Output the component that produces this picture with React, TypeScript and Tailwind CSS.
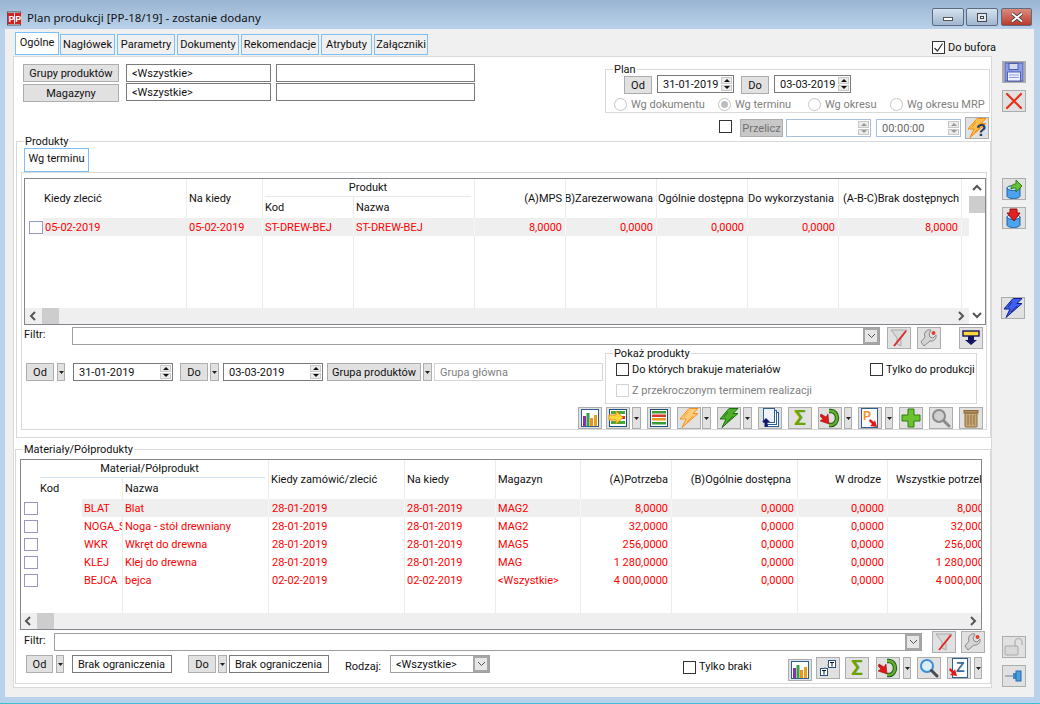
import type { ReactNode } from "react";

type Props = { className?: string; children?: ReactNode };

const borderLine = "border-r border-[#ececec]";

function Btn({ className = "", children }: Props) {
  return (
    <div className={`flex h-[18px] shrink-0 items-center justify-center border border-[#adadad] bg-[#e1e1e1] ${className}`}>
      {children}
    </div>
  );
}

function Drop({ className = "" }: Props) {
  return (
    <div className={`flex h-[18px] shrink-0 items-center justify-center border border-[#adadad] bg-[#e1e1e1] ${className}`}>
      <svg width="5" height="3" viewBox="0 0 5 3">
        <path d="M0 0h5L2.5 3z" fill="#222" />
      </svg>
    </div>
  );
}

function Inp({ className = "", children }: Props) {
  return (
    <div className={`flex h-[18px] shrink-0 items-center whitespace-nowrap border border-[#7a7a7a] bg-white pl-[5px] ${className}`}>
      {children}
    </div>
  );
}

function Spinner({ muted }: { muted?: boolean }) {
  const fill = muted ? "#999" : "#111";
  return (
    <div className="ml-auto mr-[1px] flex h-[14px] w-[11px] flex-col gap-[1px]">
      <div className="flex h-[7px] items-center justify-center border border-[#c8c8c8] bg-[#ececec]">
        <svg width="6" height="3" viewBox="0 0 6 3">
          <path d="M0 3 3 0l3 3z" fill={fill} />
        </svg>
      </div>
      <div className="flex h-[7px] items-center justify-center border border-[#c8c8c8] bg-[#ececec]">
        <svg width="6" height="3" viewBox="0 0 6 3">
          <path d="M0 0h6L3 3z" fill={fill} />
        </svg>
      </div>
    </div>
  );
}

function Chevron({ dir, color = "#555" }: { dir: "l" | "r" | "u" | "d"; color?: string }) {
  const d = { l: "M6 1 2 5l4 4", r: "M3 1l4 4-4 4", u: "M1 7l4-4 4 4", d: "M1 3l4 4 4-4" }[dir];
  return (
    <svg width="10" height="10" viewBox="0 0 10 10" className="shrink-0">
      <path d={d} fill="none" stroke={color} strokeWidth="2" />
    </svg>
  );
}

function ComboArrow() {
  return (
    <div className="ml-auto flex h-full w-[16px] items-center justify-center border-[2px] border-[#a6a6a6] bg-[#e6e6e6]">
      <svg width="9" height="6" viewBox="0 0 9 6">
        <path d="M1 1l3.5 3.5L8 1" fill="none" stroke="#555" strokeWidth="1" />
      </svg>
    </div>
  );
}

function Check({ className = "", checked }: { className?: string; checked?: boolean }) {
  return (
    <div className={`flex h-[13px] w-[13px] shrink-0 items-center justify-center border border-[#333] bg-white ${className}`}>
      {checked && (
        <svg width="11" height="11" viewBox="0 0 11 11">
          <path d="M1.5 6 4.5 9 9.5 1.5" fill="none" stroke="#333" strokeWidth="1.2" />
        </svg>
      )}
    </div>
  );
}

function Radio({ label, on, className = "" }: { label: string; on?: boolean; className?: string }) {
  return (
    <div className={`flex items-center text-[#808080] ${className}`}>
      <div className="flex h-[13px] w-[13px] items-center justify-center rounded-full border border-[#c4c4c4] bg-white">
        {on && <div className="h-[7px] w-[7px] rounded-full bg-[#bdbdbd]" />}
      </div>
      <span className="ml-[4px] whitespace-nowrap">{label}</span>
    </div>
  );
}

function Tool({ className = "", children }: Props) {
  return (
    <div className={`flex h-[22px] w-[24px] shrink-0 items-center justify-center border border-[#adadad] bg-[#e1e1e1] ${className}`}>
      {children}
    </div>
  );
}

function ToolDrop({ className = "" }: Props) {
  return (
    <div className={`flex h-[22px] shrink-0 items-center justify-center border border-[#adadad] bg-[#e1e1e1] ${className}`}>
      <svg width="5" height="3" viewBox="0 0 5 3">
        <path d="M0 0h5L2.5 3z" fill="#222" />
      </svg>
    </div>
  );
}

function Ico({ children, w = 20, h = 20 }: { children: ReactNode; w?: number; h?: number }) {
  return (
    <svg width={w} height={h} viewBox="0 0 20 20">
      {children}
    </svg>
  );
}

const IconChart = () => (
  <Ico>
    <rect x="1.5" y="1.5" width="17" height="17" fill="#fff" stroke="#2f6090" />
    <rect x="3" y="8" width="3" height="10" fill="#8a2fb0" />
    <rect x="6.5" y="5" width="3" height="13" fill="#3aa040" />
    <rect x="10" y="10" width="3" height="8" fill="#f09020" />
    <rect x="14" y="7" width="3" height="11" fill="#e8a020" />
  </Ico>
);

const IconTableArrow = () => (
  <Ico>
    <rect x="1.5" y="1.5" width="17" height="17" fill="#fff" stroke="#1d4f80" />
    <rect x="3" y="3" width="14" height="3" fill="#4aa838" />
    <rect x="3" y="8" width="14" height="3" fill="#d83828" />
    <rect x="3" y="13" width="14" height="3" fill="#4aa838" />
    <path d="M1 7h7V3l7 6.5L8 16v-4H1z" fill="#ffd83a" stroke="#f08a10" />
  </Ico>
);

const IconStripes = () => (
  <Ico>
    <rect x="1.5" y="1.5" width="17" height="17" fill="#fff" stroke="#1d4f80" />
    <rect x="3" y="3" width="14" height="2.5" fill="#3d9a3a" />
    <rect x="3" y="6.5" width="14" height="2.5" fill="#d83828" />
    <rect x="3" y="10" width="14" height="2.5" fill="#e89a20" />
    <rect x="3" y="14" width="14" height="2.5" fill="#3d9a3a" />
  </Ico>
);

const Bolt = ({ fill, stroke }: { fill: string; stroke: string }) => (
  <>
    <path d="M10 0.500h9l-5 5h5L3 19.500l4-8.500H1z" fill={fill} stroke={stroke} strokeLinejoin="round" />
    <path d="M9 4 5 9M14 8 8 14" stroke={stroke} strokeWidth="0.8" />
  </>
);

const IconPages = () => (
  <Ico>
    <rect x="7.5" y="4.5" width="11" height="14" fill="#fff" stroke="#2f5f90" />
    <rect x="5.5" y="2.5" width="11" height="14" fill="#fff" stroke="#2f5f90" />
    <rect x="3.5" y="0.5" width="11" height="14" fill="#eef4ff" stroke="#2f5f90" />
    <path d="M6 10l4 4H7.5v5h-3v-5H2z" fill="#16166e" />
  </Ico>
);

const Sigma = () => <span className="text-[21px] font-bold leading-none text-[#6da300]">Σ</span>;

const IconLoop = () => (
  <Ico>
    <path d="M9 3h2a6 7 0 0 1 0 14H9" fill="none" stroke="#1f5a14" strokeWidth="4.4" />
    <path d="M9 3h2a6 7 0 0 1 0 14H9" fill="none" stroke="#66b030" strokeWidth="2.4" />
    <path d="M1 6l5 3 2-3 1 10-9-3 3-2-3-3z" fill="#e01818" stroke="#8a0c0c" strokeWidth="0.5" />
  </Ico>
);

const IconPDoc = () => (
  <Ico>
    <rect x="1.5" y="0.5" width="16" height="19" fill="#fff" stroke="#2f5f90" />
    <text x="3" y="12" fontSize="12" fontWeight="700" fontFamily="Liberation Sans" fill="#f09030">P</text>
    <path d="M10 11l4 3 1-2 2 7-7-1 2-2-3-3z" fill="#e01818" />
  </Ico>
);

const IconPlus = () => (
  <Ico>
    <path d="M7 1h6v6h6v6h-6v6H7v-6H1V7h6z" fill="#6cc22e" stroke="#2f7a14" />
  </Ico>
);

const IconSearch = ({ ring, glass, handle }: { ring: string; glass: string; handle: string }) => (
  <Ico>
    <circle cx="8" cy="8" r="6" fill={glass} stroke={ring} strokeWidth="2" />
    <path d="M12.5 12.5 18 18" stroke={handle} strokeWidth="3" strokeLinecap="round" />
  </Ico>
);

const IconTrash = () => (
  <Ico>
    <rect x="4" y="5" width="12" height="14" rx="1" fill="#c8a878" stroke="#8a6a38" />
    <path d="M7 7v10M10 7v10M13 7v10" stroke="#8a6a38" />
    <rect x="3" y="2.5" width="14" height="2.5" fill="#b09060" stroke="#8a6a38" />
  </Ico>
);

const IconFilter = () => (
  <Ico>
    <path d="M2 2h16l-6 8v8l-4-2v-6z" fill="#d8d8d8" stroke="#a8a8a8" />
    <path d="M5 18 17 3" stroke="#e02828" strokeWidth="2" />
  </Ico>
);

const IconWrench = () => (
  <Ico>
    <path d="M12 2a5 5 0 0 0-6 7l-4 5 3 4 6-5a5 5 0 0 0 6-6l-3 3-3-1-1-3z" fill="#d4d4d4" stroke="#8a8a8a" />
    <circle cx="14.5" cy="5" r="2" fill="#e04030" />
  </Ico>
);

const IconDownBar = () => (
  <Ico>
    <rect x="2" y="3" width="16" height="5" fill="#ffd838" stroke="#14145e" strokeWidth="1.4" />
    <path d="M7 8h6v4h3l-6 5-6-5h3z" fill="#14145e" />
  </Ico>
);

const IconFloppy = () => (
  <Ico>
    <rect x="1" y="1" width="18" height="18" fill="#8d9ce4" stroke="#4f5fb0" />
    <rect x="5" y="1.5" width="9" height="6" fill="#d4d9f4" stroke="#4f5fb0" />
    <rect x="3.5" y="10" width="13" height="9" fill="#eef0fb" stroke="#4f5fb0" />
    <path d="M5 13h10M5 15.5h10" stroke="#8d9ce4" />
  </Ico>
);

const IconClose = () => (
  <Ico>
    <path d="M3 3 17 17M17 3 3 17" stroke="#e8301c" strokeWidth="2.2" strokeLinecap="round" />
  </Ico>
);

const Cylinder = () => (
  <>
    <path d="M3 9v8c0 1.500 3 2.500 6.500 2.500S16 18.500 16 17V9z" fill="#4ba4ec" stroke="#1f62a8" />
    <ellipse cx="9.500" cy="9" rx="6.500" ry="2.500" fill="#c6e4fb" stroke="#1f62a8" />
  </>
);

const IconDbUp = () => (
  <Ico>
    <Cylinder />
    <path d="M7 10c0-4 2-5 5-5V1l6 6-6 6V9c-2 0-4 0-5 1z" fill="#66c23a" stroke="#2e7e16" />
  </Ico>
);

const IconDbDown = () => (
  <Ico>
    <Cylinder />
    <path d="M6 1h7v4h3l-6 8-7-8h3z" fill="#e62020" stroke="#8e1010" />
  </Ico>
);

const IconLock = () => (
  <Ico>
    <path d="M11 10V5a3.500 3.500 0 0 1 7 0v3" fill="none" stroke="#bcbcbc" strokeWidth="1.600" />
    <rect x="1" y="9" width="13" height="9" rx="1" fill="#d8d8d8" stroke="#a8a8a8" />
  </Ico>
);

const IconPin = () => (
  <Ico>
    <path d="M1 10h8" stroke="#9aa0a8" strokeWidth="1.500" />
    <rect x="9" y="7" width="3" height="6" fill="#3e8bd0" />
    <rect x="12" y="5" width="5" height="10" fill="#4a9ce0" stroke="#2a6aa8" />
  </Ico>
);

const IconZDoc = () => (
  <Ico>
    <rect x="3.500" y="0.500" width="15" height="19" fill="#fff" stroke="#2f5f90" />
    <text x="7" y="14" fontSize="14" fontWeight="700" fontFamily="Liberation Sans" fill="#3a6a9a">Z</text>
    <path d="M1 10l4 3 1-2 2 7-7-1 2-2-3-3z" fill="#e01818" />
  </Ico>
);

const IconStack = () => (
  <Ico>
    <rect x="10.500" y="2.500" width="7" height="7" fill="#fff" stroke="#24507a" />
    <rect x="2.500" y="10.500" width="7" height="7" fill="#fff" stroke="#24507a" />
    <path d="M9 7h2M7 9v2" stroke="#888" />
    <path d="M12 4.500h4M14 4.500v4M4 12.500h4M6 12.500v4" stroke="#111" />
  </Ico>
);

const IconHelp = () => (
  <Ico>
    <Bolt fill="#ffc04a" stroke="#f08a10" />
    <text x="9" y="18" fontSize="17" fontWeight="700" fontFamily="Liberation Sans" fill="#1f3f6a">?</text>
  </Ico>
);

function WinBtn({ className = "", children }: Props) {
  return (
    <div className={`flex h-[18px] items-center justify-center rounded-[2px] border border-[#5d6b7e] ${className}`}>
      {children}
    </div>
  );
}

function TitleBar() {
  return (
    <div className="flex h-[29px] shrink-0 bg-gradient-to-b from-[#9ab5d2] to-[#b9d1ea] pl-[7px] pr-[8px]">
      <svg width="15" height="15" viewBox="0 0 15 15" className="mt-[11px]">
        <rect x="0.500" y="1" width="13" height="13" fill="#f4e8e8" stroke="#555" />
        <rect x="1" y="2" width="6" height="11" fill="#d82020" />
        <rect x="8" y="2" width="6" height="11" fill="#d82020" />
        <text x="1.500" y="11" fontSize="9" fontWeight="700" fontFamily="Liberation Sans" fill="#fff">P</text>
        <text x="8.300" y="11" fontSize="9" fontWeight="700" fontFamily="Liberation Sans" fill="#fff">P</text>
      </svg>
      <span className="ml-[5px] mt-[9px] whitespace-nowrap font-['Noto_Sans',sans-serif] text-[11.5px] leading-[17px] text-[#111]">
        Plan produkcji [PP-18/19] - zostanie dodany
      </span>
      <div className="ml-auto mt-[8px] flex gap-[2px]">
        <WinBtn className="w-[32px] bg-gradient-to-b from-[#d6e2ef] to-[#9fb6cf]">
          <div className="mt-[3px] h-[4px] w-[10px] border border-[#555] bg-white" />
        </WinBtn>
        <WinBtn className="w-[32px] bg-gradient-to-b from-[#d6e2ef] to-[#9fb6cf]">
          <div className="flex h-[9px] w-[10px] items-center justify-center border border-[#444] bg-[#dfe8f2]">
            <div className="h-[3px] w-[4px] border border-[#444] bg-white" />
          </div>
        </WinBtn>
        <WinBtn className="ml-[1px] w-[31px] bg-gradient-to-b from-[#dc8a80] to-[#b83a2c]">
          <svg width="14" height="11" viewBox="0 0 14 11">
            <path d="M2 1.500 12 9.500M12 1.500 2 9.500" stroke="#333" strokeWidth="3.400" />
            <path d="M2 1.500 12 9.500M12 1.500 2 9.500" stroke="#fff" strokeWidth="2" />
          </svg>
        </WinBtn>
      </div>
    </div>
  );
}

function Tabs() {
  const tabs = [
    { label: "Nagłówek", cls: "w-[55px] ml-[1px]" },
    { label: "Parametry", cls: "w-[58px] ml-[2px]" },
    { label: "Dokumenty", cls: "w-[62px] ml-[2px]" },
    { label: "Rekomendacje", cls: "w-[78px] ml-[2px]" },
    { label: "Atrybuty", cls: "w-[51px] ml-[2px]" },
    { label: "Załączniki", cls: "w-[54px] ml-[2px]" },
  ];
  return (
    <div className="flex h-[27px] shrink-0 pl-[10px] pt-[3px]">
      <div className="flex h-[23px] w-[44px] items-center justify-center border border-[#7cc0f6] bg-white pb-[3px]">Ogólne</div>
      {tabs.map((t) => (
        <div
          key={t.label}
          className={`mt-[2px] flex h-[21px] items-center justify-center border border-[#7cc0f6] bg-[#f0f0f0] ${t.cls}`}
        >
          {t.label}
        </div>
      ))}
      <div className="ml-auto mr-[-3px] mt-[9px] flex h-[13px] items-center">
        <Check checked />
        <span className="ml-[3px] whitespace-nowrap">Do bufora</span>
      </div>
    </div>
  );
}

function TopFilters() {
  return (
    <div className="flex h-[84px] shrink-0">
      <div className="ml-[9px] mt-[7px] w-[452px]">
        <div className="flex">
          <Btn className="w-[96px]">Grupy produktów</Btn>
          <Inp className="ml-[7px] w-[145px]">&lt;Wszystkie&gt;</Inp>
          <Inp className="ml-[5px] w-[199px]" />
        </div>
        <div className="mt-[1px] flex">
          <Btn className="mt-[1px] w-[96px]">Magazyny</Btn>
          <Inp className="ml-[7px] w-[145px]">&lt;Wszystkie&gt;</Inp>
          <Inp className="ml-[5px] w-[199px]" />
        </div>
      </div>
      <div className="ml-[130px] mt-[12px] w-[385px]">
        <div className="relative h-[44px] border border-[#d9d9d9]">
          <span className="absolute left-[7px] top-[-7px] bg-white px-[1px] leading-[13px]">Plan</span>
          <div className="ml-[18px] mt-[5px] flex items-start">
            <Btn className="mt-[1px] w-[28px]">Od</Btn>
            <Inp className="ml-[5px] w-[77px]">
              31-01-2019
              <Spinner />
            </Inp>
            <Btn className="ml-[7px] mt-[1px] w-[28px]">Do</Btn>
            <Inp className="ml-[5px] w-[77px]">
              03-03-2019
              <Spinner />
            </Inp>
          </div>
          <div className="ml-[8px] mt-[3px] flex h-[14px]">
            <Radio className="w-[104px]" label="Wg dokumentu" />
            <Radio className="w-[90px]" label="Wg terminu" on />
            <Radio className="w-[82px]" label="Wg okresu" />
            <Radio label="Wg okresu MRP" />
          </div>
        </div>
        <div className="ml-[114px] mt-[4px] flex items-start">
          <Check className="mt-[3px]" />
          <div className="ml-[8px] mt-[2px] flex h-[18px] w-[43px] items-center justify-center border border-[#adadad] bg-[#c8c8c8] text-[#707070]">
            Przelicz
          </div>
          <Inp className="ml-[3px] mt-[2px] w-[85px] border-[#a9c0dc]">
            <Spinner muted />
          </Inp>
          <Inp className="ml-[5px] mt-[2px] w-[85px] border-[#a9c0dc] text-[#666]">
            00:00:00
            <Spinner muted />
          </Inp>
          <Tool className="ml-[4px]">
            <IconHelp />
          </Tool>
        </div>
      </div>
    </div>
  );
}

function ProductTable() {
  const cells = [
    "05-02-2019",
    "ST-DREW-BEJ",
    "ST-DREW-BEJ",
    "8,0000",
    "0,0000",
    "0,0000",
    "0,0000",
    "8,0000",
  ];
  return (
    <div className="ml-[2px] mt-[5px] flex h-[147px] w-[962px] shrink-0 border border-[#82878e] bg-white">
      <div className="w-[944px] shrink-0">
        <div className="grid h-[129px] grid-cols-[162px_76px_91px_121px_91px_91px_91px_91px_123px_7px] grid-rows-[39px_18px_72px]">
          <div className={`flex items-center pl-[19px] ${borderLine}`}>Kiedy zlecić</div>
          <div className={`flex items-center pl-[2px] ${borderLine}`}>Na kiedy</div>
          <div className={`col-span-2 flex flex-col ${borderLine}`}>
            <div className="mx-[2px] mr-[3px] flex h-[18px] items-center justify-center border-b border-[#e2e8ee]">Produkt</div>
            <div className="flex flex-1">
              <div className={`flex w-[91px] items-center pl-[2px] ${borderLine}`}>Kod</div>
              <div className="flex items-center pl-[2px]">Nazwa</div>
            </div>
          </div>
          <div className={`flex items-center justify-end overflow-hidden whitespace-nowrap pr-[3px] ${borderLine}`}>(A)MPS</div>
          <div className={`flex items-center justify-end overflow-hidden whitespace-nowrap pr-[3px] ${borderLine}`}>(B)Zarezerwowana</div>
          <div className={`flex items-center overflow-hidden whitespace-nowrap pl-[1px] ${borderLine}`}>Ogólnie dostępna</div>
          <div className={`flex items-center overflow-hidden whitespace-nowrap ${borderLine}`}>Do wykorzystania</div>
          <div className={`flex items-center overflow-hidden whitespace-nowrap pl-[4px] ${borderLine}`}>(A-B-C)Brak dostępnych</div>
          <div />

          <div className={`flex items-center ${borderLine}`}>
            <div className="ml-[4px] h-[13px] w-[14px] shrink-0 border border-[#9b96c4] bg-white" />
            <div className="flex h-full flex-1 items-center bg-[#efefef] pl-[2px] text-[#f00]">05-02-2019</div>
          </div>
          {cells.map((c, i) => (
            <div
              key={i}
              className={`flex items-center border-r border-[#f6f6f6] bg-[#efefef] text-[#f00] ${i < 3 ? "pl-[2px]" : "justify-end pr-[3px]"}`}
            >
              {c}
            </div>
          ))}
          <div className="bg-[#efefef]" />

          {[0, 1, 2, 3, 4, 5, 6, 7, 8].map((i) => (
            <div key={i} className={borderLine} />
          ))}
          <div />
        </div>
        <div className="flex h-[16px] items-center bg-[#efefef]">
          <div className="ml-[4px] mr-[3px]">
            <Chevron dir="l" />
          </div>
          <div className="h-full w-[17px] bg-[#cdcdcd]" />
          <div className="ml-auto mr-[3px]">
            <Chevron dir="r" />
          </div>
        </div>
      </div>
      <div className="flex w-[16px] flex-col items-center">
        <div className="mt-[4px]">
          <Chevron dir="u" />
        </div>
        <div className="mt-[3px] h-[17px] w-[16px] bg-[#cdcdcd]" />
        <div className="mb-[4px] mt-auto">
          <Chevron dir="d" />
        </div>
      </div>
    </div>
  );
}

function ProductsGroup() {
  return (
    <div className="relative ml-[2px] h-[297px] w-[975px] shrink-0 border border-[#d9d9d9]">
      <span className="absolute left-[7px] top-[-7px] bg-white px-[1px] leading-[13px]">Produkty</span>
      <div className="ml-[7px] mt-[6px] flex h-[24px] w-[65px] items-center justify-center border border-[#7cc0f6] bg-white pb-[3px]">
        Wg terminu
      </div>
      <div className="ml-[4px] h-[258px] w-[966px] border border-[#d9d9d9]">
        <ProductTable />
        <div className="mt-[2px] flex h-[18px] items-start">
          <span className="ml-[2px] w-[48px] leading-[16px]">Filtr:</span>
          <div className="flex h-[18px] w-[808px] items-center border border-[#a0a0a0] bg-white">
            <ComboArrow />
          </div>
          <Tool className="ml-[7px] h-[18px]">
            <IconFilter />
          </Tool>
          <Tool className="ml-[6px] h-[18px]">
            <IconWrench />
          </Tool>
          <Tool className="ml-[18px] h-[18px]">
            <IconDownBar />
          </Tool>
        </div>
        <div className="mt-[8px] flex h-[51px]">
          <div className="ml-[4px] mt-[10px] flex w-[579px] items-start">
            <Btn className="w-[28px]">Od</Btn>
            <Drop className="ml-[3px] w-[8px]" />
            <Inp className="ml-[8px] w-[100px]">
              31-01-2019
              <Spinner />
            </Inp>
            <Btn className="ml-[7px] w-[28px]">Do</Btn>
            <Drop className="ml-[2px] w-[9px]" />
            <Inp className="ml-[4px] w-[100px]">
              03-03-2019
              <Spinner />
            </Inp>
            <Btn className="ml-[4px] w-[94px]">Grupa produktów</Btn>
            <Drop className="ml-[2px] w-[9px]" />
            <Inp className="ml-[2px] w-[169px] border-[#d4d4d4] text-[#808080]">Grupa główna</Inp>
          </div>
          <div className="relative w-[372px] border border-[#d9d9d9]">
            <span className="absolute left-[7px] top-[-7px] bg-white px-[1px] leading-[13px]">Pokaż produkty</span>
            <div className="ml-[10px] mt-[9px] flex h-[13px] items-center">
              <Check />
              <span className="ml-[3px]">Do których brakuje materiałów</span>
              <Check className="ml-auto" />
              <span className="ml-[3px] w-[90px] whitespace-nowrap">Tylko do produkcji</span>
            </div>
            <div className="ml-[10px] mt-[8px] flex h-[13px] items-center text-[#808080]">
              <Check className="border-[#d4d4d4]" />
              <span className="ml-[3px]">Z przekroczonym terminem realizacji</span>
            </div>
          </div>
        </div>
        <div className="ml-[556px] mt-[3px] flex">
          <Tool><IconChart /></Tool>
          <Tool className="ml-[4px]"><IconTableArrow /></Tool>
          <ToolDrop className="ml-[2px] w-[9px]" />
          <Tool className="ml-[6px]"><IconStripes /></Tool>
          <Tool className="ml-[6px]"><Ico><Bolt fill="#ffcb78" stroke="#f09020" /></Ico></Tool>
          <ToolDrop className="ml-[1px] w-[9px]" />
          <Tool className="ml-[6px]"><Ico><Bolt fill="#4eb02a" stroke="#1d6e10" /></Ico></Tool>
          <ToolDrop className="ml-[2px] w-[9px]" />
          <Tool className="ml-[6px]"><IconPages /></Tool>
          <Tool className="ml-[6px]"><Sigma /></Tool>
          <Tool className="ml-[6px]"><IconLoop /></Tool>
          <ToolDrop className="ml-[2px] w-[8px]" />
          <Tool className="ml-[6px]"><IconPDoc /></Tool>
          <ToolDrop className="ml-[3px] w-[8px]" />
          <Tool className="ml-[6px]"><IconPlus /></Tool>
          <Tool className="ml-[6px] bg-[#c8c8c8]"><IconSearch ring="#8a8a8a" glass="#cfcfcf" handle="#8a8a8a" /></Tool>
          <Tool className="ml-[6px]"><IconTrash /></Tool>
        </div>
      </div>
    </div>
  );
}

const materials = [
  { code: "BLAT", name: "Blat", date: "28-01-2019", mag: "MAG2", need: "8,0000" },
  { code: "NOGA_S", name: "Noga - stół drewniany", date: "28-01-2019", mag: "MAG2", need: "32,0000" },
  { code: "WKR", name: "Wkręt do drewna", date: "28-01-2019", mag: "MAG5", need: "256,0000" },
  { code: "KLEJ", name: "Klej do drewna", date: "28-01-2019", mag: "MAG", need: "1 280,0000" },
  { code: "BEJCA", name: "bejca", date: "02-02-2019", mag: "<Wszystkie>", need: "4 000,0000" },
];

function MaterialTable() {
  return (
    <div className="ml-[4px] mt-[9px] h-[171px] w-[962px] shrink-0 overflow-hidden border border-[#82878e] bg-white">
      <div className="grid h-[153px] w-[972px] grid-cols-[102px_146px_136px_91px_85px_91px_126px_90px_105px] grid-rows-[39px_18px_18px_18px_18px_18px_24px] whitespace-nowrap">
        <div className={`col-span-2 flex flex-col ${borderLine}`}>
          <div className="ml-[19px] mr-[3px] flex h-[18px] items-center justify-center border-b border-[#d4e6f4] pr-[6px]">Materiał/Półprodukt</div>
          <div className="flex flex-1">
            <div className={`flex w-[102px] items-center pl-[19px] ${borderLine}`}>Kod</div>
            <div className="flex items-center pl-[2px]">Nazwa</div>
          </div>
        </div>
        <div className={`flex items-center pl-[2px] ${borderLine}`}>Kiedy zamówić/zlecić</div>
        <div className={`flex items-center pl-[2px] ${borderLine}`}>Na kiedy</div>
        <div className={`flex items-center pl-[2px] ${borderLine}`}>Magazyn</div>
        <div className={`flex items-center justify-end pr-[3px] ${borderLine}`}>(A)Potrzeba</div>
        <div className={`flex items-center justify-end pr-[6px] ${borderLine}`}>(B)Ogólnie dostępna</div>
        <div className={`flex items-center justify-end pr-[6px] ${borderLine}`}>W drodze</div>
        <div className="flex items-center pl-[8px]">Wszystkie potrzeby</div>

        {materials.map((m, i) => {
          const rowBg = i === 0 ? "bg-[#efefef]" : "bg-white";
          const cell = `flex items-center text-[#f00] ${rowBg} ${i === 0 ? "border-r border-[#f6f6f6]" : borderLine}`;
          return (
            <div key={m.code} className="contents">
              <div className={`flex items-center overflow-hidden ${borderLine}`}>
                <div className="ml-[3px] h-[13px] w-[14px] shrink-0 border border-[#9b96c4] bg-white" />
                <div className="ml-[44px] flex h-full flex-1 items-center overflow-hidden text-[#f00]">
                  <span className={`flex h-full w-full items-center pl-[2px] ${rowBg}`}>{m.code}</span>
                </div>
              </div>
              <div className={`${cell} pl-[2px]`}>{m.name}</div>
              <div className={`${cell} pl-[3px]`}>{m.date}</div>
              <div className={`${cell} pl-[2px]`}>{m.date}</div>
              <div className={`${cell} pl-[2px]`}>{m.mag}</div>
              <div className={`${cell} justify-end pr-[3px]`}>{m.need}</div>
              <div className={`${cell} justify-end pr-[3px]`}>0,0000</div>
              <div className={`${cell} justify-end pr-[3px]`}>0,0000</div>
              <div className={`flex items-center justify-end pr-[3px] text-[#f00] ${rowBg}`}>{m.need}</div>
            </div>
          );
        })}

        {[0, 1, 2, 3, 4, 5, 6, 7].map((i) => (
          <div key={i} className={borderLine} />
        ))}
        <div />
      </div>
      <div className="flex h-[16px] items-center bg-[#efefef]">
        <div className="ml-[3px] mr-[3px]">
          <Chevron dir="l" />
        </div>
        <div className="h-full w-[17px] bg-[#cdcdcd]" />
        <div className="ml-auto mr-[3px]">
          <Chevron dir="r" />
        </div>
      </div>
    </div>
  );
}

function MaterialsGroup() {
  return (
    <div className="relative ml-[1px] mt-[11px] h-[235px] w-[976px] shrink-0 border border-[#d9d9d9]">
      <span className="absolute left-[7px] top-[-7px] bg-white px-[1px] leading-[13px]">Materiały/Półprodukty</span>
      <MaterialTable />
      <div className="mt-[1px] flex h-[20px] items-start">
        <span className="ml-[8px] mt-[2px] w-[30px] leading-[16px]">Filtr:</span>
        <div className="mt-[2px] flex h-[18px] w-[868px] items-center border border-[#a0a0a0] bg-white">
          <ComboArrow />
        </div>
        <Tool className="ml-[10px] h-[18px]">
          <IconFilter />
        </Tool>
        <Tool className="ml-[5px] h-[18px]">
          <IconWrench />
        </Tool>
      </div>
      <div className="mt-[4px] flex items-start">
        <Btn className="ml-[10px] w-[27px]">Od</Btn>
        <Drop className="ml-[3px] w-[8px]" />
        <Inp className="ml-[8px] w-[100px]">Brak ograniczenia</Inp>
        <Btn className="ml-[16px] w-[28px]">Do</Btn>
        <Drop className="ml-[2px] w-[9px]" />
        <Inp className="ml-[2px] w-[100px]">Brak ograniczenia</Inp>
        <span className="ml-[16px] mt-[4px] w-[45px] leading-[16px]">Rodzaj:</span>
        <div className="flex h-[18px] w-[100px] items-center whitespace-nowrap border border-[#a0a0a0] bg-white pl-[5px]">
          &lt;Wszystkie&gt;
          <ComboArrow />
        </div>
        <Check className="ml-[193px] mt-[6px]" />
        <span className="ml-[3px] mt-[4px] w-[89px] leading-[16px]">Tylko braki</span>
        <Tool className="mt-[4px]"><IconChart /></Tool>
        <Tool className="ml-[4px] mt-[2px]"><IconStack /></Tool>
        <Tool className="ml-[5px] mt-[2px]"><Sigma /></Tool>
        <Tool className="ml-[7px] mt-[2px]"><IconLoop /></Tool>
        <ToolDrop className="ml-[3px] mt-[2px] w-[8px]" />
        <Tool className="ml-[6px] mt-[2px]"><IconSearch ring="#3a8fd8" glass="#dceefb" handle="#4a4a4a" /></Tool>
        <Tool className="ml-[6px] mt-[2px]"><IconZDoc /></Tool>
        <ToolDrop className="ml-[3px] mt-[2px] w-[8px]" />
      </div>
    </div>
  );
}

function Sidebar() {
  return (
    <div className="flex w-[41px] shrink-0 flex-col pl-[9px]">
      <Tool className="mt-[32px] border-[2px] border-[#0a78d8]"><IconFloppy /></Tool>
      <Tool className="mt-[7px]"><IconClose /></Tool>
      <Tool className="mt-[66px]"><IconDbUp /></Tool>
      <Tool className="mt-[7px]"><IconDbDown /></Tool>
      <Tool className="ml-[-1px] mt-[68px]"><Ico><Bolt fill="#3f5ff0" stroke="#101f80" /></Ico></Tool>
      <Tool className="mt-auto"><IconLock /></Tool>
      <Tool className="mb-[10px] mt-[7px]"><IconPin /></Tool>
    </div>
  );
}

export default function App() {
  return (
    <div className="flex h-[704px] w-[1040px] flex-col overflow-hidden bg-[#b9d1ea] font-['Roboto',sans-serif] text-[11px] leading-none text-[#111]">
      <TitleBar />
      <div className="ml-[5px] flex h-[668px] w-[1029px] shrink-0 bg-[#f0f0f0]">
        <div className="flex w-[988px] shrink-0 flex-col">
          <Tabs />
          <div className="ml-[8px] h-[632px] w-[979px] shrink-0 border border-[#d9d9d9] bg-white">
            <TopFilters />
            <ProductsGroup />
            <MaterialsGroup />
          </div>
        </div>
        <Sidebar />
      </div>
      <div className="mt-[6px] h-[1px] bg-[#3cc0d4]" />
    </div>
  );
}
